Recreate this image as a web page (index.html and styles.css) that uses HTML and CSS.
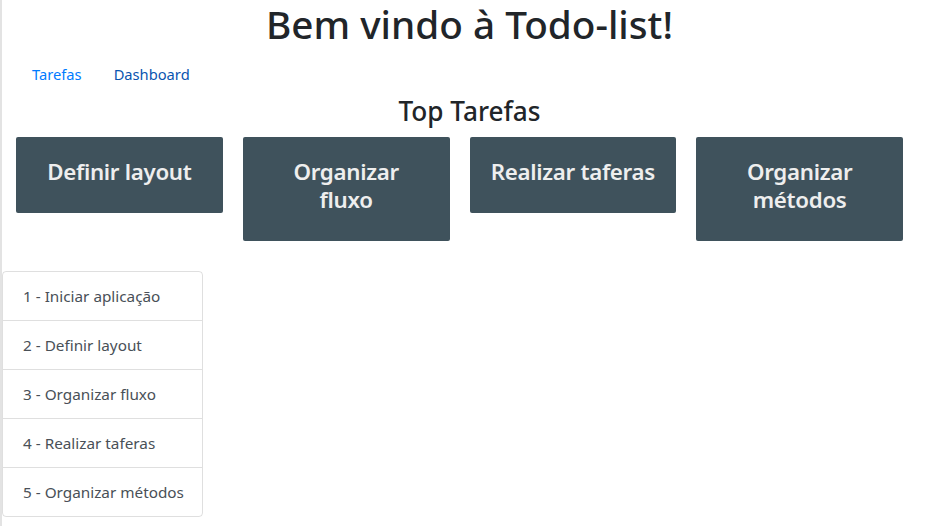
FILE: index.html
```html
<!DOCTYPE html>
<html lang="pt">
<head>
<meta charset="utf-8">
<title>Todo-list</title>
<link rel="stylesheet" href="styles.css">
</head>
<body>
<h1 class="title">Bem vindo à Todo-list!</h1>
<nav class="nav">
  <a class="nav-link" href="#">Tarefas</a>
  <a class="nav-link nav-link-visited" href="#">Dashboard</a>
</nav>
<h3 class="section-title">Top Tarefas</h3>
<div class="grid">
  <div class="col"><a class="module" href="#"><h4 class="module-title">Definir layout</h4></a></div>
  <div class="col"><a class="module" href="#"><h4 class="module-title">Organizar<br>fluxo</h4></a></div>
  <div class="col"><a class="module" href="#"><h4 class="module-title">Realizar taferas</h4></a></div>
  <div class="col"><a class="module" href="#"><h4 class="module-title">Organizar<br>métodos</h4></a></div>
</div>
<ul class="list-group">
  <li class="list-item">1 - Iniciar aplicação</li>
  <li class="list-item">2 - Definir layout</li>
  <li class="list-item">3 - Organizar fluxo</li>
  <li class="list-item">4 - Realizar taferas</li>
  <li class="list-item">5 - Organizar métodos</li>
</ul>
</body>
</html>
```
FILE: styles.css
```css
* { box-sizing: border-box; }
html, body { margin: 0; padding: 0; }
body {
  font-family: "Segoe UI", "Noto Sans", "Open Sans", sans-serif;
  font-size: 16px;
  line-height: 1.5;
  color: #212529;
  background: #fff;
  border-left: 2px solid #e3e3e3;
  min-height: 526px;
}
.title {
  margin: 0 0 8px;
  font-size: 38.7px;
  font-weight: 500;
  line-height: 48px;
  text-align: center;
}
.nav {
  display: flex;
  padding-left: 14px;
}
.nav-link {
  display: block;
  padding: 6px 16px 9px;
  color: #007bff;
  text-decoration: none;
  font-size: 14.7px;
  line-height: 24px;
}
.nav-link-visited { color: #0a55b0; }
.section-title {
  margin: 0 0 8px;
  font-size: 26.2px;
  font-weight: 500;
  line-height: 33.6px;
  text-align: center;
}
.grid {
  display: grid;
  grid-template-columns: repeat(4, 1fr);
  align-items: start;
  width: 907px;
  margin-left: 14px;
  padding: 0 0 10px;
}
.col { padding: 0 20px 20px 0; }
.module {
  display: block;
  padding: 21px 20px 19px;
  text-align: center;
  color: #eee;
  background: #3f525c;
  border-radius: 2px;
  text-decoration: none;
}
.module-title {
  margin: 0 -4px 8px;
  font-size: 22.3px;
  font-weight: 600;
  line-height: 28px;
  letter-spacing: -0.3px;
  white-space: nowrap;
}
.list-group {
  list-style: none;
  margin: 0;
  padding: 0;
  width: 201px;
  border: 1px solid rgba(0,0,0,.125);
  border-radius: 4px;
}
.list-item {
  padding: 12px 20px;
  font-size: 15.3px;
  line-height: 24px;
  color: #495057;
  white-space: nowrap;
  border-bottom: 1px solid rgba(0,0,0,.125);
}
.list-item:last-child { border-bottom: 0; }
```
